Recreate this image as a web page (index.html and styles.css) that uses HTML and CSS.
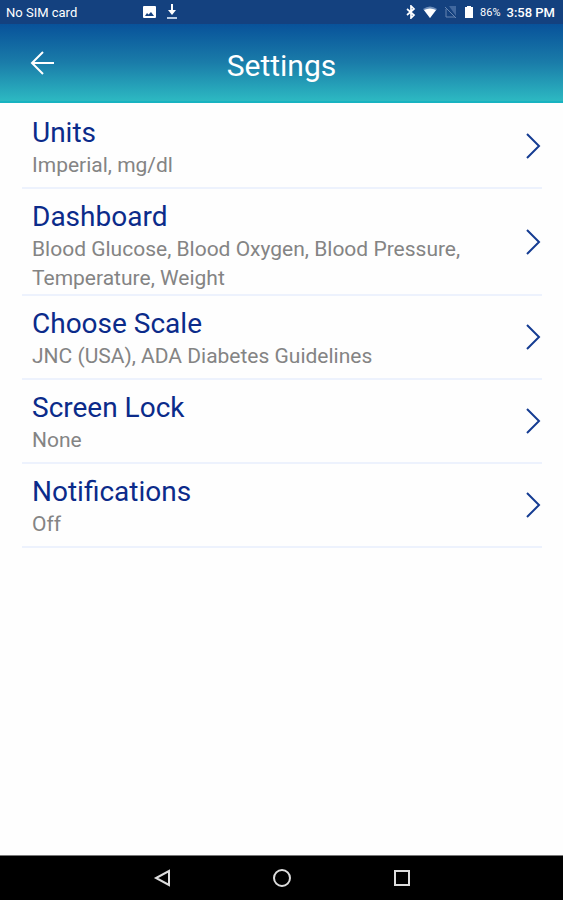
FILE: index.html
```html
<!DOCTYPE html>
<html lang="en">
<head>
    <meta charset="UTF-8">
    <meta name="viewport" content="width=device-width, initial-scale=1.0">
    <title>Settings</title>
    <link rel="stylesheet" href="styles.css">
</head>
<body>
    <div class="status-bar">
        <span class="carrier">No SIM card</span>
        <div class="notices">
            <svg width="14" height="14" viewBox="0 0 14 14">
                <rect x="1" y="1" width="13" height="12" rx="1" fill="#fff"/>
                <path d="M3 11L5 8L6.500 9.500L9 7L12 11Z" fill="#14417f"/>
            </svg>
            <svg width="14" height="16" viewBox="0 0 14 16">
                <path d="M6 0H8V6H11L7 11L3 6H6Z" fill="#fff"/>
                <path d="M2 13H12V15H2Z" fill="#b9cbe2"/>
            </svg>
        </div>
        <div class="system">
            <svg width="10" height="14" viewBox="0 0 10 14">
                <path d="M1 4L8 10L5 13V1L8 4L1 10" fill="none" stroke="#fff" stroke-width="1.700"/>
            </svg>
            <svg width="16" height="14" viewBox="0 0 16 14">
                <path d="M1 4Q8 -1 15 4L8 13Z" fill="#6d8db9"/>
                <path d="M2 5Q8 2 14 5L8 13Z" fill="#fff"/>
            </svg>
            <svg class="no-sim" width="14" height="14" viewBox="0 0 14 14">
                <path d="M5 1H12V11Z" fill="#41689f"/>
                <path d="M1 2L12 13M2 4V12H11" fill="none" stroke="#6685b1"/>
            </svg>
            <svg class="battery" width="10" height="14" viewBox="0 0 10 14">
                <path d="M3 1H7V2H9V13H1V2H3Z" fill="#fff"/>
            </svg>
            <span class="percent">86%</span>
            <span class="clock">3:58 PM</span>
        </div>
    </div>

    <header class="header">
        <button class="back" type="button" aria-label="Back">
            <svg width="26" height="26" viewBox="0 0 26 26">
                <path d="M24 13H2M13 2L2 13L13 24" fill="none" stroke="#fff" stroke-width="2"/>
            </svg>
        </button>
        <h1>Settings</h1>
    </header>

    <main class="settings">
        <a class="row" href="#units">
            <div class="text">
                <h2>Units</h2>
                <p>Imperial, mg/dl</p>
            </div>
            <svg class="chevron" viewBox="0 0 16 28"><path d="M2 2L14 14L2 26"/></svg>
        </a>
        <a class="row" href="#dashboard">
            <div class="text">
                <h2>Dashboard</h2>
                <p>Blood Glucose, Blood Oxygen, Blood Pressure, Temperature, Weight</p>
            </div>
            <svg class="chevron" viewBox="0 0 16 28"><path d="M2 2L14 14L2 26"/></svg>
        </a>
        <a class="row" href="#scale">
            <div class="text">
                <h2>Choose Scale</h2>
                <p>JNC (USA), ADA Diabetes Guidelines</p>
            </div>
            <svg class="chevron" viewBox="0 0 16 28"><path d="M2 2L14 14L2 26"/></svg>
        </a>
        <a class="row" href="#lock">
            <div class="text">
                <h2>Screen Lock</h2>
                <p>None</p>
            </div>
            <svg class="chevron" viewBox="0 0 16 28"><path d="M2 2L14 14L2 26"/></svg>
        </a>
        <a class="row" href="#notifications">
            <div class="text">
                <h2>Notifications</h2>
                <p>Off</p>
            </div>
            <svg class="chevron" viewBox="0 0 16 28"><path d="M2 2L14 14L2 26"/></svg>
        </a>
    </main>

    <nav class="nav-bar">
        <button type="button" aria-label="Back">
            <svg width="20" height="20" viewBox="0 0 20 20"><path d="M17 3V17L4 10Z"/></svg>
        </button>
        <button type="button" aria-label="Home">
            <svg width="20" height="20" viewBox="0 0 20 20"><circle cx="10" cy="10" r="8"/></svg>
        </button>
        <button type="button" aria-label="Recent apps">
            <svg width="20" height="20" viewBox="0 0 20 20"><rect x="3" y="3" width="14" height="14"/></svg>
        </button>
    </nav>
</body>
</html>
```

FILE: styles.css
```css
* {
    box-sizing: border-box;
}
body {
    margin: 0;
    min-height: 100vh;
    display: flex;
    flex-direction: column;
    background: #fefefe;
    font-family: Roboto, sans-serif;
}
h1, h2, p {
    margin: 0;
    font-weight: 400;
}
button {
    padding: 0;
    border: 0;
    background: none;
}
svg {
    display: block;
}

/* status bar */
.status-bar {
    display: flex;
    align-items: center;
    height: 24px;
    padding: 0 8px 0 6px;
    background: #14417f;
    color: #fff;
    font-size: 13px;
    font-weight: 500;
}
.carrier {
    width: 136px;
    font-weight: 400;
}
.notices {
    display: flex;
    align-items: center;
    gap: 9px;
}
.system {
    display: flex;
    align-items: center;
    gap: 6px;
    margin-left: auto;
}
.percent {
    font-size: 11px;
    font-weight: 400;
}

/* header */
.header {
    display: grid;
    grid-template-columns: 56px 1fr 56px;
    align-items: center;
    height: 79px;
    border-bottom: 2px solid #17b3c1;
    background: linear-gradient(#08529a, #1a7ca9 50%, #2db9c2);
}
.back {
    justify-self: end;
}
.header h1 {
    padding-top: 6px;
    color: #fff;
    font-size: 30px;
    line-height: 36px;
    text-align: center;
}

/* list */
.settings {
    flex: 1;
    padding: 2px 21px 0 22px;
}
.row {
    display: flex;
    align-items: center;
    min-height: 84px;
    padding: 0 1px 0 10px;
    border-bottom: 2px solid #edf2fd;
    text-decoration: none;
}
.text {
    flex: 1;
    align-self: flex-start;
    padding: 10px 40px 1px 0;
}
.text h2 {
    color: #0b2b8a;
    font-size: 28px;
    line-height: 36px;
}
.text p {
    color: #848484;
    font-size: 21px;
    line-height: 29px;
}
.chevron {
    width: 16px;
    height: 28px;
    fill: none;
    stroke: #153c92;
    stroke-width: 2;
}

/* navigation */
.nav-bar {
    display: flex;
    justify-content: center;
    align-items: center;
    gap: 100px;
    height: 45px;
    border-top: 1px solid #777;
    background: #000;
}
.nav-bar svg {
    fill: none;
    stroke: #ddd;
    stroke-width: 2;
}
```
